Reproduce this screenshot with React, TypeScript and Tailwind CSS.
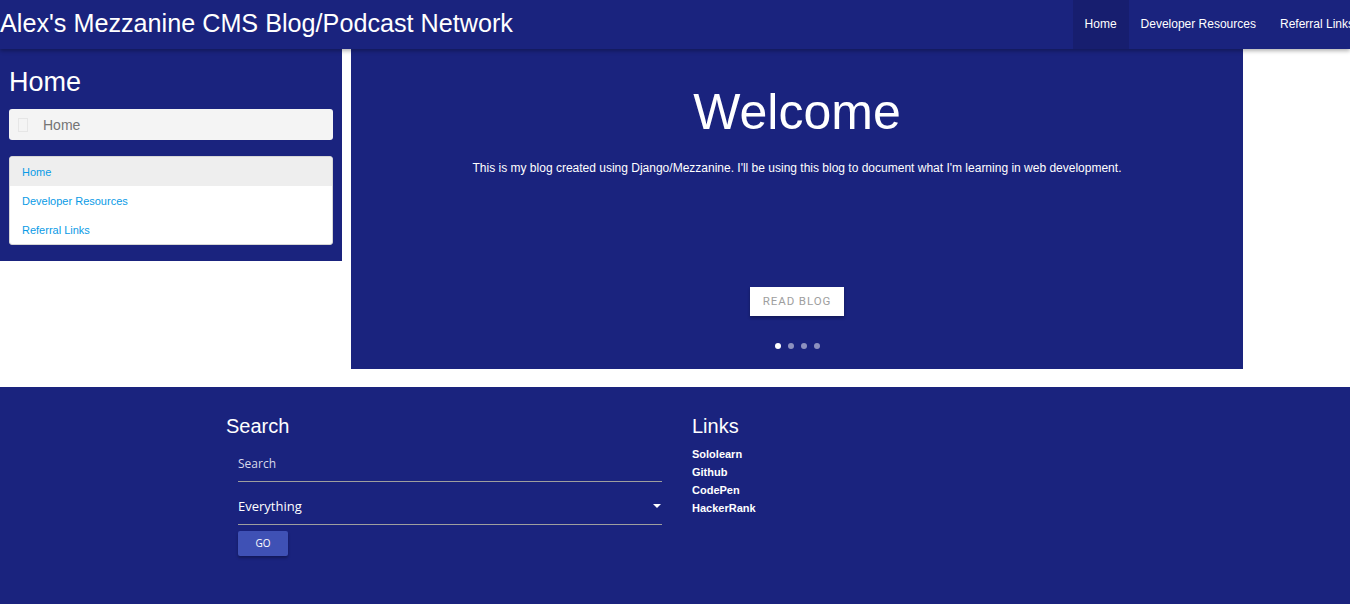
import React from "react";

const arial = { fontFamily: '"Liberation Sans", Arial, sans-serif' };

export default function App() {
  return (
    <div className="w-full overflow-hidden bg-white" style={arial}>
      {/* Header */}
      <header className="relative z-10 flex h-[49px] items-stretch bg-[#1a237e] text-white shadow-[0_2px_4px_rgba(0,0,0,0.3)]">
        <div className="flex items-center whitespace-nowrap pb-[1px] text-[25.2px] leading-none">
          Alex's Mezzanine CMS Blog/Podcast Network
        </div>
        <div className="flex-1" />
        <nav className="mr-[-16px] flex shrink-0 items-stretch whitespace-nowrap text-[12px]">
          <a className="flex items-center bg-[#171e6f] px-3 pb-[2px]">Home</a>
          <a className="flex items-center px-3 pb-[2px]">Developer Resources</a>
          <a className="flex items-center px-3 pb-[2px]">Referral Links</a>
        </nav>
      </header>

      {/* Main */}
      <div className="flex items-start gap-[9px]">
        <aside className="w-[342px] shrink-0 bg-[#1a237e] px-[9px] pb-4 pt-[18px]">
          <h1 className="text-[27px] leading-[30px] text-white">Home</h1>
          <div className="mt-3 flex h-[31px] items-center rounded-[3px] bg-[#f4f4f4] pl-[9px]">
            <span className="h-[14px] w-[10px] border border-[#e6e6e6]" />
            <span className="ml-[15px] pt-[2px] text-[14px] text-[#757575]">Home</span>
          </div>
          <ul className="mt-4 overflow-hidden rounded-[3px] border border-[#d6d6d6] bg-white text-[11px] text-[#0a9be6]">
            <li className="flex h-[29px] items-center bg-[#eeeeee] px-3 pt-[2px]">Home</li>
            <li className="flex h-[29px] items-center px-3 pt-[2px]">Developer Resources</li>
            <li className="flex h-[29px] items-center px-3 pt-[2px]">Referral Links</li>
          </ul>
        </aside>

        <section className="flex h-[320px] w-[892px] shrink-0 flex-col items-center bg-[#1a237e] text-white">
          <h2 className="mt-[34px] text-[50px] leading-[58px]">Welcome</h2>
          <p className="mt-[20px] text-[12px] leading-[14px]">
            This is my blog created using Django/Mezzanine. I'll be using this blog to document what I'm learning in web development.
          </p>
          <button
            className="mt-[112px] h-[29px] w-[94px] bg-white text-[11.5px] tracking-[0.9px] text-[#9e9e9e] shadow-[0_2px_3px_rgba(0,0,0,0.3)]"
            style={{ fontFamily: 'Roboto, "Liberation Sans", sans-serif' }}
          >
            READ BLOG
          </button>
          <div className="mt-[27px] flex gap-[7px]">
            <span className="h-[6px] w-[6px] rounded-full bg-white" />
            <span className="h-[6px] w-[6px] rounded-full bg-white/50" />
            <span className="h-[6px] w-[6px] rounded-full bg-white/50" />
            <span className="h-[6px] w-[6px] rounded-full bg-white/50" />
          </div>
        </section>
      </div>

      {/* Footer */}
      <footer className="mt-[18px] h-[240px] bg-[#1a237e] text-white">
        <div className="ml-[226px] flex pt-[25px]">
          <div className="w-[451px] pr-[15px]">
            <h3 className="text-[20px] leading-[28px]">Search</h3>
            <div className="ml-3" style={{ fontFamily: '"Open Sans", "Noto Sans", sans-serif' }}>
              <div className="mt-[14px] flex h-[28px] items-start border-b border-[#9e9e9e] pt-[2px] text-[12px] leading-[16px] text-[#d8d9ea]">
                Search
              </div>
              <div className="mt-[14px] flex h-[29px] items-start justify-between border-b border-[#9e9e9e] pt-[1px] text-[13px] leading-[18px]">
                <span>Everything</span>
                <svg width="8" height="5" viewBox="0 0 8 5" className="mr-[1px] mt-[7px]">
                  <path d="M0 0h8L4 4z" fill="white" />
                </svg>
              </div>
              <button className="mt-[6px] h-[25px] w-[50px] rounded-[2px] bg-[#3f51b5] text-[10px] text-white shadow-[0_2px_3px_rgba(0,0,0,0.3)]">
                GO
              </button>
            </div>
          </div>
          <div className="pl-[15px]">
            <h3 className="text-[20px] leading-[28px]">Links</h3>
            <ul className="mt-[5px] text-[11px] font-bold leading-[18px]">
              <li>Sololearn</li>
              <li>Github</li>
              <li>CodePen</li>
              <li>HackerRank</li>
            </ul>
          </div>
        </div>
      </footer>
    </div>
  );
}
